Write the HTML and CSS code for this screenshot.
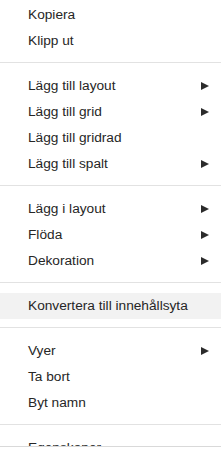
FILE: index.html
```html
<!DOCTYPE html>
<html lang="sv">
<head>
<meta charset="utf-8">
<title>Meny</title>
<link rel="stylesheet" href="styles.css">
</head>
<body>
<div class="menu">
  <div class="item">Kopiera</div>
  <div class="item">Klipp ut</div>
  <div class="sep"></div>
  <div class="item">Lägg till layout<span class="arrow"></span></div>
  <div class="item">Lägg till grid<span class="arrow"></span></div>
  <div class="item">Lägg till gridrad</div>
  <div class="item">Lägg till spalt<span class="arrow"></span></div>
  <div class="sep"></div>
  <div class="item">Lägg i layout<span class="arrow"></span></div>
  <div class="item">Flöda<span class="arrow"></span></div>
  <div class="item">Dekoration<span class="arrow"></span></div>
  <div class="sep"></div>
  <div class="item active">Konvertera till innehållsyta</div>
  <div class="sep"></div>
  <div class="item">Vyer<span class="arrow"></span></div>
  <div class="item">Ta bort</div>
  <div class="item">Byt namn</div>
  <div class="sep"></div>
  <div class="item">Egenskaper</div>
</div>
</body>
</html>
```
FILE: styles.css
```css
html, body {
  margin: 0;
  padding: 0;
  background: #ffffff;
}
.menu {
  width: 221px;
  height: 447px;
  box-sizing: border-box;
  padding-top: 2px;
  overflow: hidden;
  border-bottom: 1px solid #d9d9d9;
  font-family: "Liberation Sans", Arial, sans-serif;
  font-size: 13.7px;
  color: #262626;
}
.item {
  height: 26px;
  line-height: 26px;
  padding: 0 12px 0 28px;
  display: flex;
  justify-content: space-between;
  align-items: center;
  white-space: nowrap;
}
.item.active {
  background: #f2f2f2;
}
.arrow {
  width: 0;
  height: 0;
  border-left: 8px solid #2b2b2b;
  border-top: 4.5px solid transparent;
  border-bottom: 4.5px solid transparent;
}
.sep {
  height: 1px;
  background: #e2e2e2;
  margin: 8px 0 10px;
}
```
